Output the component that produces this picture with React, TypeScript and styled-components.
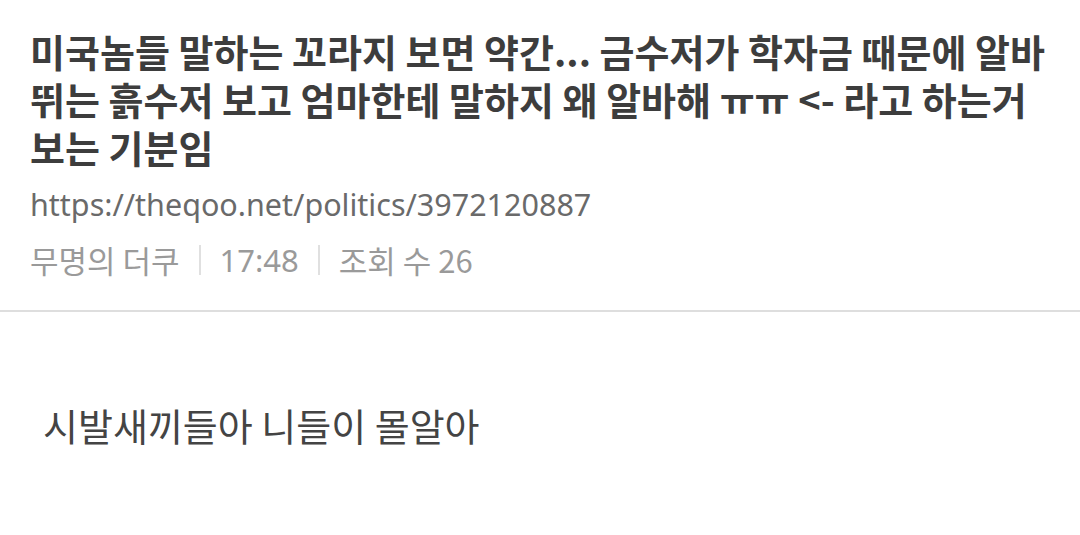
import React from "react";
import styled, { createGlobalStyle } from "styled-components";

const Global = createGlobalStyle`
  html, body { margin: 0; padding: 0; background: #fff; }
  body { font-family: "Noto Sans CJK KR", "Noto Sans", sans-serif; }
`;

const Page = styled.div`
  width: 1080px;
  height: 535px;
  overflow: hidden;
  background: #fff;
`;

const Header = styled.header`
  padding: 27px 20px 30px 30px;
  border-bottom: 2px solid #dedede;
`;

const Title = styled.h1`
  margin: 0;
  font-size: 38px;
  font-weight: 700;
  line-height: 48px;
  color: #3d3d3d;
`;

const Url = styled.div`
  margin-top: 13px;
  font-family: "Noto Sans", "Noto Sans CJK KR", sans-serif;
  font-size: 30.5px;
  line-height: 40px;
  color: #6a6a6a;
`;

const Meta = styled.div`
  margin-top: 16px;
  display: flex;
  align-items: center;
  font-size: 31px;
  line-height: 40px;
  color: #9a9a9a;
`;

const MetaItem = styled.span<{ $latin?: boolean }>`
  font-family: ${(p) =>
    p.$latin ? `"Noto Sans", sans-serif` : `"Noto Sans CJK KR", sans-serif`};
`;

const Sep = styled.span`
  width: 2px;
  height: 30px;
  background: #e0e0e0;
  margin: 0 19px 0 19px;
`;

const Body = styled.div`
  padding: 89px 43px 0 43px;
  font-size: 38px;
  line-height: 48px;
  color: #444;
`;

export default function App() {
  return (
    <Page>
      <Global />
      <Header>
        <Title>
          미국놈들 말하는 꼬라지 보면 약간... 금수저가 학자금 때문에 알바
          뛰는 흙수저 보고 엄마한테 말하지 왜 알바해 ㅠㅠ &lt;- 라고 하는거
          보는 기분임
        </Title>
        <Url>https://theqoo.net/politics/3972120887</Url>
        <Meta>
          <MetaItem>무명의 더쿠</MetaItem>
          <Sep />
          <MetaItem $latin>17:48</MetaItem>
          <Sep />
          <MetaItem>조회 수 26</MetaItem>
        </Meta>
      </Header>
      <Body>시발새끼들아 니들이 몰알아</Body>
    </Page>
  );
}
